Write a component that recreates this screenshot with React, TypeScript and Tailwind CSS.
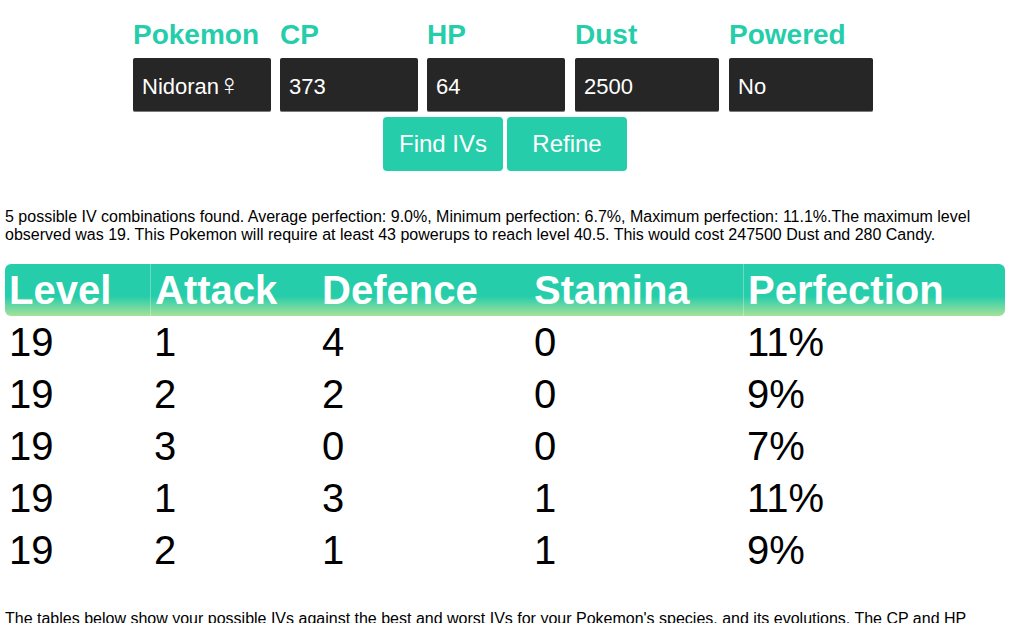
const fields = [
  { label: 'Pokemon', value: 'Nidoran', sign: '♀', w: 'w-[138px]', col: 'w-[147px]' },
  { label: 'CP', value: '373', sign: '', w: 'w-[138px]', col: 'w-[147px]' },
  { label: 'HP', value: '64', sign: '', w: 'w-[138px]', col: 'w-[148px]' },
  { label: 'Dust', value: '2500', sign: '', w: 'w-[144px]', col: 'w-[154px]' },
  { label: 'Powered', value: 'No', sign: '', w: 'w-[144px]', col: 'w-[144px]' },
];

const cols = [
  { name: 'Level', w: 'w-[145px]', extra: 'rounded-l-md' },
  { name: 'Attack', w: 'w-[168px]', extra: 'border-l border-white/30' },
  { name: 'Defence', w: 'w-[212px]', extra: '' },
  { name: 'Stamina', w: 'w-[213px]', extra: '' },
  { name: 'Perfection', w: 'w-[262px]', extra: 'rounded-r-md border-l border-white/30' },
];

const rows = [
  ['19', '1', '4', '0', '11%'],
  ['19', '2', '2', '0', '9%'],
  ['19', '3', '0', '0', '7%'],
  ['19', '1', '3', '1', '11%'],
  ['19', '2', '1', '1', '9%'],
];

export default function App() {
  return (
    <div className="h-[623px] overflow-hidden bg-white px-[5px] pt-[19px] text-black font-['Liberation_Sans',Arial,sans-serif]">
      {/* Form */}
      <div className="flex ml-[128px]">
        {fields.map((f) => (
          <div key={f.label} className={`${f.col} flex flex-col`}>
            <div className="h-[32px] text-[28px] leading-[32px] font-bold text-[#26cdaa]">{f.label}</div>
            <div
              className={`${f.w} mt-[7px] h-[54px] bg-[#262626] border-b border-[#7a7a7a] rounded-[2px] flex items-center pl-[9px] pt-[3px] text-[22px] text-white`}
            >
              {f.value}
              {f.sign && <span className="text-[30px] leading-none font-light -mt-[2px] -ml-[1px]">{f.sign}</span>}
            </div>
          </div>
        ))}
      </div>

      <div className="flex gap-[4px] mt-[5px] ml-[378px]">
        <button className="w-[120px] h-[54px] rounded-[4px] bg-[#26cdaa] text-white text-[24px]">Find IVs</button>
        <button className="w-[120px] h-[54px] rounded-[4px] bg-[#26cdaa] text-white text-[24px]">Refine</button>
      </div>

      {/* Summary */}
      <p className="mt-[37px] text-[16px] leading-[18px] w-[990px]">
        5 possible IV combinations found. Average perfection: 9.0%, Minimum perfection: 6.7%, Maximum perfection: 11.1%.The maximum level observed was 19. This Pokemon will require at least 43 powerups to reach level 40.5. This would cost 247500 Dust and 280 Candy.
      </p>

      {/* Results table */}
      <div className="mt-[20px] w-[1000px]">
        <div className="flex h-[52px] rounded-md bg-[linear-gradient(to_bottom,#26cdaa_62%,#a6e19a)]">
          {cols.map((c) => (
            <div key={c.name} className={`${c.w} ${c.extra} pl-[4px] text-[40px] font-bold text-white leading-[52px]`}>
              {c.name}
            </div>
          ))}
        </div>
        {rows.map((r, i) => (
          <div key={i} className="flex h-[52px]">
            {r.map((v, j) => (
              <div key={j} className={`${cols[j].w} pl-[4px] text-[40px] leading-[52px]`}>
                {v}
              </div>
            ))}
          </div>
        ))}
      </div>

      <p className="mt-[34px] text-[16px] leading-[18px] w-[990px]">
        The tables below show your possible IVs against the best and worst IVs for your Pokemon's species, and its evolutions. The CP and HP values shown are what your Pokemon would have at each level.
      </p>
    </div>
  );
}
